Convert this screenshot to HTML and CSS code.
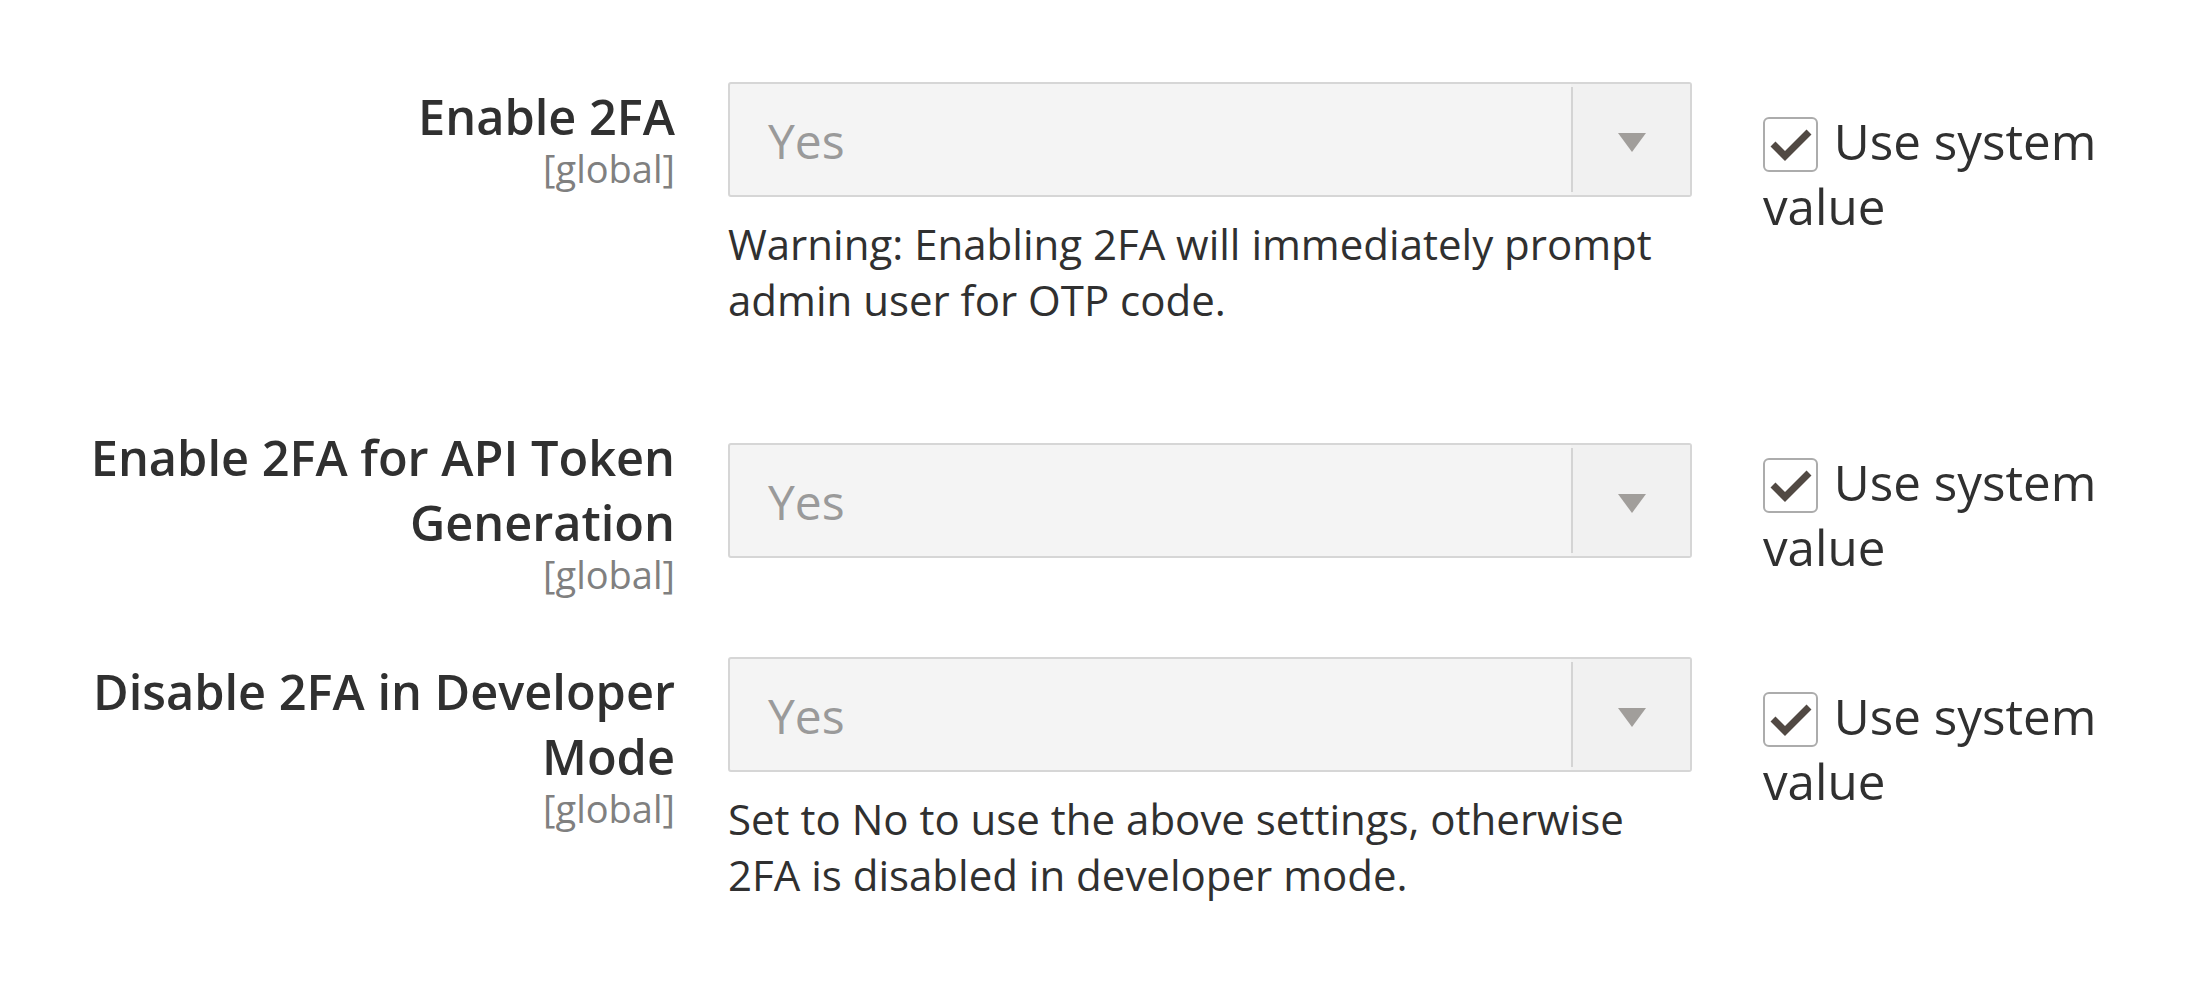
FILE: index.html
```html
<!DOCTYPE html>
<html lang="en">
<head>
<meta charset="utf-8">
<title>Two Factor Auth settings</title>
<link rel="stylesheet" href="styles.css">
</head>
<body>
<div class="config">
  <div class="row row-first">
    <div class="label-col">
      <label class="label">Enable 2FA</label>
      <span class="scope">[global]</span>
    </div>
    <div class="control-col">
      <div class="select">
        <span class="select-value">Yes</span>
        <span class="select-arrow"><svg width="28" height="19" viewBox="0 0 28 19"><polygon points="0,0 28,0 14,19" fill="#a19e9b"/></svg></span>
      </div>
      <p class="note">Warning: Enabling 2FA will immediately prompt admin user for OTP code.</p>
    </div>
    <div class="default-col">
      <label class="use-default"><span class="checkbox"><svg width="50" height="50" viewBox="0 0 50 50"><polyline points="7,24 19,36 43,12" fill="none" stroke="#514943" stroke-width="7"/></svg></span> Use system value</label>
    </div>
  </div>

  <div class="row row-second">
    <div class="label-col">
      <label class="label">Enable 2FA for API Token Generation</label>
      <span class="scope">[global]</span>
    </div>
    <div class="control-col control-shifted">
      <div class="select">
        <span class="select-value">Yes</span>
        <span class="select-arrow"><svg width="28" height="19" viewBox="0 0 28 19"><polygon points="0,0 28,0 14,19" fill="#a19e9b"/></svg></span>
      </div>
    </div>
    <div class="default-col">
      <label class="use-default"><span class="checkbox"><svg width="50" height="50" viewBox="0 0 50 50"><polyline points="7,24 19,36 43,12" fill="none" stroke="#514943" stroke-width="7"/></svg></span> Use system value</label>
    </div>
  </div>

  <div class="row row-third">
    <div class="label-col">
      <label class="label">Disable 2FA in Developer Mode</label>
      <span class="scope">[global]</span>
    </div>
    <div class="control-col">
      <div class="select">
        <span class="select-value">Yes</span>
        <span class="select-arrow"><svg width="28" height="19" viewBox="0 0 28 19"><polygon points="0,0 28,0 14,19" fill="#a19e9b"/></svg></span>
      </div>
      <p class="note">Set to No to use the above settings, otherwise 2FA is disabled in developer mode.</p>
    </div>
    <div class="default-col">
      <label class="use-default"><span class="checkbox"><svg width="50" height="50" viewBox="0 0 50 50"><polyline points="7,24 19,36 43,12" fill="none" stroke="#514943" stroke-width="7"/></svg></span> Use system value</label>
    </div>
  </div>
</div>
</body>
</html>
```

FILE: styles.css
```css
html, body {
  margin: 0;
  padding: 0;
  background: #ffffff;
}

body {
  font-family: "Open Sans", "DejaVu Sans", sans-serif;
  color: #303030;
}

.config {
  padding-top: 82px;
  display: flex;
  flex-direction: column;
}

.row {
  display: flex;
  align-items: flex-start;
}

.row-first {
  margin-bottom: 95px;
}

.row-second {
  margin-bottom: 64px;
}

.label-col {
  width: 620px;
  margin-left: 55px;
  padding-top: 2px;
  text-align: right;
  display: flex;
  flex-direction: column;
  align-items: flex-end;
}

.label {
  display: block;
  font-size: 48.7px;
  font-weight: 600;
  line-height: 65px;
  color: #303030;
}

.scope {
  display: block;
  font-size: 38px;
  line-height: 38px;
  color: #808080;
}

.control-col {
  width: 964px;
  margin-left: 53px;
}

.control-shifted {
  margin-top: 20px;
}

.select {
  box-sizing: border-box;
  height: 115px;
  border: 2px solid #d6d6d6;
  border-radius: 3px;
  background: #f4f4f4;
  display: flex;
  align-items: stretch;
}

.select-value {
  flex: 1;
  display: flex;
  align-items: center;
  padding-left: 38px;
  padding-top: 2px;
  font-size: 48px;
  color: #9a9a9a;
}

.select-arrow {
  width: 119px;
  display: flex;
  align-items: center;
  justify-content: center;
  background: linear-gradient(#d4d4d4, #d4d4d4) left 3px / 2px calc(100% - 6px) no-repeat, #f1f1f1;
}

.select-arrow svg {
  display: block;
  margin-top: 6px;
  margin-left: 2px;
}

.note {
  margin: 19px 0 0;
  font-size: 42px;
  line-height: 56px;
  color: #303030;
}

.default-col {
  width: 380px;
  margin-left: 71px;
  padding-top: 26px;
}

.use-default {
  font-size: 49.3px;
  line-height: 65px;
  color: #303030;
}

.checkbox {
  display: inline-flex;
  align-items: center;
  justify-content: center;
  box-sizing: border-box;
  width: 55px;
  height: 55px;
  margin-top: 9px;
  margin-right: 3px;
  border: 2px solid #acacac;
  border-radius: 6px;
  background: #ffffff;
  vertical-align: top;
}

.checkbox svg {
  display: block;
}
```
